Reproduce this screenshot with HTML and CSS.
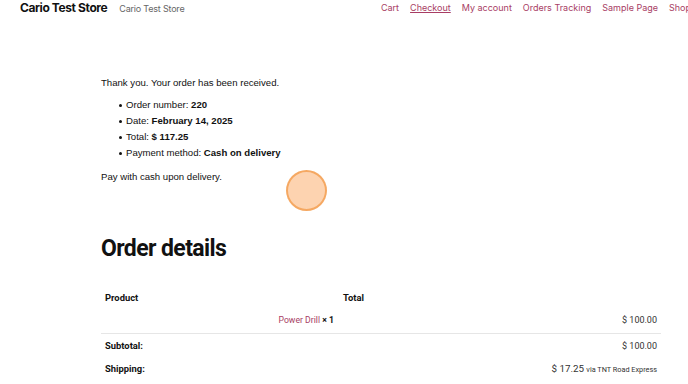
FILE: index.html
```html
<!DOCTYPE html>
<html lang="en">
<head>
    <meta charset="UTF-8">
    <meta name="viewport" content="width=device-width, initial-scale=1.0">
    <title>Order received - Cario Test Store</title>
    <link rel="stylesheet" href="styles.css">
</head>
<body>

    <!-- Site header -->
    <div class="site-header">
        <div class="brand">
            <a class="site-title" href="#">Cario Test Store</a>
            <span class="site-tagline">Cario Test Store</span>
        </div>
        <nav class="site-nav">
            <a href="#">Cart</a>
            <a href="#" class="current">Checkout</a>
            <a href="#">My account</a>
            <a href="#">Orders Tracking</a>
            <a href="#">Sample Page</a>
            <a href="#">Shop</a>
        </nav>
    </div>

    <!-- Order received -->
    <div class="content">
        <p class="notice">Thank you. Your order has been received.</p>
        <ul class="order-overview">
            <li>Order number: <strong>220</strong></li>
            <li>Date: <strong>February 14, 2025</strong></li>
            <li>Total: <strong>$&nbsp;117.25</strong></li>
            <li>Payment method: <strong>Cash on delivery</strong></li>
        </ul>
        <p class="notice">Pay with cash upon delivery.</p>

        <h2 class="section-title">Order details</h2>

        <table class="order-details">
            <thead>
                <tr>
                    <th class="col-product">Product</th>
                    <th class="col-total">Total</th>
                </tr>
            </thead>
            <tbody>
                <tr class="item-row">
                    <td class="product-name"><a href="#">Power Drill</a> <strong>× 1</strong></td>
                    <td class="amount">$&nbsp;100.00</td>
                </tr>
            </tbody>
            <tfoot>
                <tr>
                    <th>Subtotal:</th>
                    <td class="amount">$&nbsp;100.00</td>
                </tr>
                <tr>
                    <th>Shipping:</th>
                    <td class="amount"><span class="price">$&nbsp;17.25</span> <small>via TNT Road Express</small></td>
                </tr>
            </tfoot>
        </table>
    </div>

    <!-- click marker -->
    <div class="click-dot"></div>

</body>
</html>
```

FILE: styles.css
```css
body {font-family: "Liberation Sans", Arial, sans-serif;margin: 0;padding: 0;box-sizing: border-box;color: #111;background: #fff;overflow: hidden;}
*, *::before, *::after {box-sizing: inherit;}
a {color: #a83d64;text-decoration: none;}
.site-header {display: flex;align-items: center;justify-content: space-between;height: 14px;padding: 0 0 0 20px;font-family: Inter, "Noto Sans", sans-serif;white-space: nowrap;}
.brand {display: flex;align-items: baseline;gap: 12px;}
.site-title {color: #111;font-weight: 700;font-size: 12px;letter-spacing: -0.4px;}
.site-tagline {color: #666;font-size: 9px;letter-spacing: -0.2px;}
.site-nav {display: flex;gap: 11px;font-size: 9px;margin-right: -3px;}
.site-nav a.current {text-decoration: underline;}
.content {width: 560px;margin: 0 0 0 101px;padding-top: 61px;}
.notice {font-size: 9.6px;margin: 0;line-height: 16px;}
.order-overview {margin: 6px 0 8px 0;padding: 0 0 0 25px;font-size: 9.6px;line-height: 16px;}
.order-overview li {list-style: none;position: relative;}
.order-overview li::before {content: "";position: absolute;left: -7px;top: 7px;width: 3px;height: 3px;border-radius: 50%;background: #111;}
.section-title {font-family: Roboto, sans-serif;font-weight: 700;font-size: 23px;letter-spacing: -0.6px;margin: 50px 0 25px;line-height: 28px;}
.order-details {width: 100%;border-collapse: collapse;font-family: Roboto, sans-serif;font-size: 9px;}
.order-details th {text-align: left;font-weight: 700;font-size: 9.4px;padding: 4px 4px;}
.order-details thead th {padding-bottom: 8px;}
.order-details .col-product {width: 238px;}
.order-details td {padding: 4px;}
.order-details .product-name {text-align: right;padding-right: 5px;font-size: 8.7px;}
.order-details .item-row td {padding-bottom: 8px;border-bottom: 1px solid #e6e6e6;}
.order-details .amount {text-align: right;color: #333;}
.order-details tfoot th, .order-details tfoot td {padding-top: 6px;padding-bottom: 6px;}
.price {font-size: 9.8px;}
.order-details small {font-size: 7.3px;}
.click-dot {position: absolute;left: 286px;top: 170px;width: 41px;height: 41px;border-radius: 50%;background: rgba(252, 196, 150, 0.75);border: 2px solid rgba(244, 164, 90, 0.9);}
```
